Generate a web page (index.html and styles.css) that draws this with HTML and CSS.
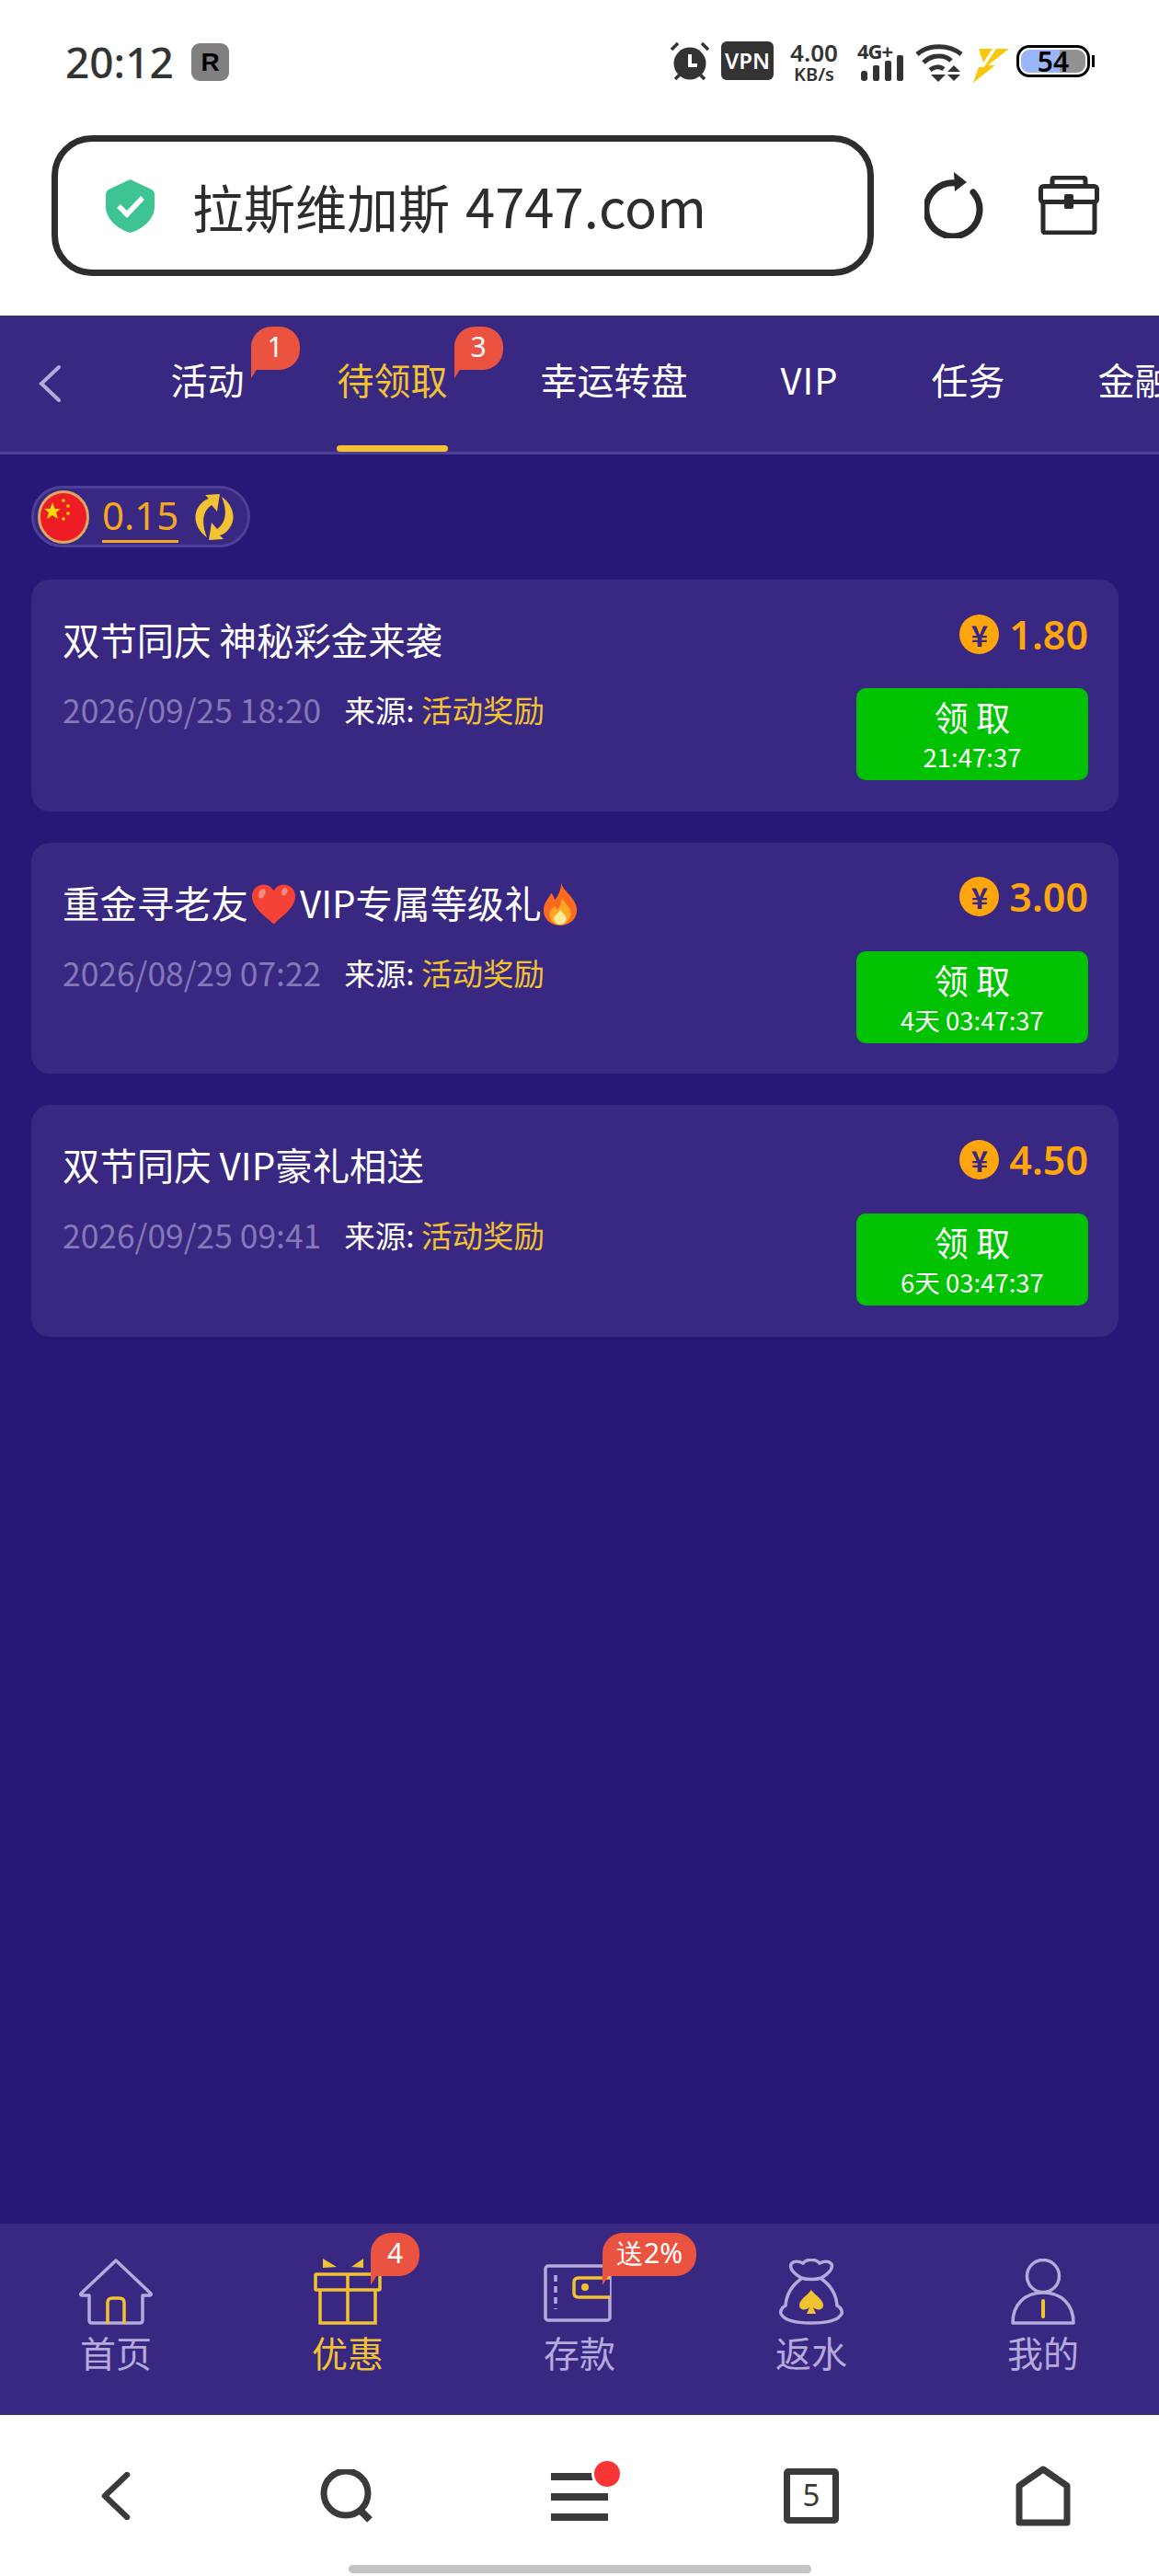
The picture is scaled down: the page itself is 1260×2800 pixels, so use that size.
FILE: index.html
```html
<!DOCTYPE html>
<html lang="zh">
    <head>
        <meta charset="utf-8">
        <title>拉斯维加斯 4747.com</title>
        <link rel="stylesheet" href="styles.css">
    </head>
    <body>
        <div class="page">
            <div class="statusbar">
                <div class="status-left">
                    <span class="clock">20:12</span>
                    <span class="app-icon">R</span>
                </div>
                <div class="status-right">
                    <svg class="ic-alarm" viewBox="0 0 42 43">
                        <circle cx="21" cy="24" r="17.5" fill="#333"/>
                        <path d="M21 14V26H29" fill="none" stroke="#fff" stroke-width="4"/>
                        <path d="M1 9L8 2M41 9L34 2M5 41L10 36M37 41L32 36" stroke="#333" stroke-width="3.5"/>
                    </svg>
                    <span class="vpn">VPN</span>
                    <div class="speed"><span class="speed-num">4.00</span><span class="speed-unit">KB/s</span></div>
                    <div class="signal">
                        <span class="signal-type">4G+</span>
                        <svg class="ic-bars" viewBox="0 0 48 28">
                            <rect x="2" y="17" width="7" height="11" rx="3" fill="#333"/>
                            <rect x="15" y="11" width="7" height="17" rx="2" fill="#333"/>
                            <rect x="28" y="6" width="7" height="22" rx="2" fill="#333"/>
                            <rect x="41" y="0" width="7" height="28" rx="2" fill="#333"/>
                        </svg>
                    </div>
                    <svg class="ic-wifi" viewBox="0 0 52 42">
                        <path d="M2 12C15 1 37 1 50 12" fill="none" stroke="#333" stroke-width="5"/>
                        <path d="M9 21C18 12 32 12 39 19" fill="none" stroke="#333" stroke-width="5"/>
                        <path d="M16 29C21 25 27 25 31 28" fill="none" stroke="#333" stroke-width="5"/>
                        <path d="M17 34H33L25 42ZM42 24L49 31H35ZM35 34H49L42 41Z" fill="#333"/>
                    </svg>
                    <svg class="ic-bolt" viewBox="0 0 39 38">
                        <path d="M6 1H21L11 16ZM25 1H39L16 19L24 19L0 38L6 21L12 21L5 31Z" fill="#f9c80e"/>
                    </svg>
                    <div class="battery"><span class="battery-num">54</span></div>
                </div>
            </div>

            <div class="toolbar">
                <div class="urlbar">
                    <svg class="ic-shield" viewBox="0 0 53 58">
                        <path d="M26.5 0L50 11Q53 13 53 17V30C53 44 38 55 26.5 58C15 55 0 44 0 30V17Q0 13 3 11Z" fill="#3dc492"/>
                        <path d="M14 29L23 38L40 20" fill="none" stroke="#fff" stroke-width="5.5"/>
                    </svg>
                    <span class="urltext"><span class="urltext-cn">拉斯维加斯</span> 4747.com</span>
                </div>
                <svg class="ic-reload" viewBox="0 0 64 72">
                    <path d="M53 22A29 29 0 1 1 34 12" fill="none" stroke="#2a2a2a" stroke-width="7" stroke-linecap="round"/>
                    <path d="M32 0L46 11L33 21Z" fill="#2a2a2a"/>
                </svg>
                <svg class="ic-toolbox" viewBox="0 0 66 64">
                    <path d="M15 11V5Q15 2 18 2H48Q51 2 51 5V11" fill="none" stroke="#2a2a2a" stroke-width="5"/>
                    <rect x="2.500" y="11.500" width="61" height="17" rx="3" fill="none" stroke="#2a2a2a" stroke-width="5"/>
                    <path d="M5 28V59Q5 62 8 62H58Q61 62 61 59V28" fill="none" stroke="#2a2a2a" stroke-width="5"/>
                    <rect x="28" y="20" width="10" height="16" rx="2" fill="#2a2a2a"/>
                </svg>
            </div>

            <div class="tabbar">
                <div class="back-btn">
                    <svg class="ic-tabback" viewBox="0 0 26 42">
                        <path d="M23 3L4 21L23 39" fill="none" stroke="#b5aadc" stroke-width="4" stroke-linecap="round"/>
                    </svg>
                </div>
                <div class="tab"><span class="tab-label">活动<span class="badge tab-badge">1</span></span></div>
                <div class="tab tab-active"><span class="tab-label">待领取<span class="badge tab-badge">3</span></span></div>
                <div class="tab"><span class="tab-label">幸运转盘</span></div>
                <div class="tab"><span class="tab-label tab-latin">VIP</span></div>
                <div class="tab"><span class="tab-label">任务</span></div>
                <div class="tab"><span class="tab-label">金融</span></div>
            </div>

            <div class="content">
                <div class="balance">
                    <svg class="ic-flag" viewBox="0 0 56 58">
                        <ellipse cx="28" cy="29" rx="26.500" ry="27.500" fill="#ee1c25" stroke="#dca862" stroke-width="3"/>
                        <path d="M16 13L18.500 20H25L20 24L22 31L16 27L10 31L12 24L7 20H13.500Z" fill="#ffde00"/>
                        <circle cx="28" cy="11" r="1.800" fill="#ffde00"/>
                        <circle cx="33" cy="17" r="1.800" fill="#ffde00"/>
                        <circle cx="33" cy="25" r="1.800" fill="#ffde00"/>
                        <circle cx="28" cy="31" r="1.800" fill="#ffde00"/>
                    </svg>
                    <span class="balance-num">0.15</span>
                    <svg class="ic-swap" viewBox="0 0 48 50">
                        <g fill="#f2c230">
                            <path id="swap-half" d="M30 0L27 19L21 12C12 18 9 30 16 47C4 39 -2 22 10 10C13 7 15 6 18 5L14 1Z"/>
                            <use href="#swap-half" transform="rotate(180 24 25)"/>
                        </g>
                    </svg>
                </div>

                <div class="card">
                    <div class="card-left">
                        <div class="card-title">双节同庆 神秘彩金来袭</div>
                        <div class="card-meta">
                            <span class="card-date">2026/09/25 18:20</span>
                            <span class="card-source">来源: <span class="card-kind">活动奖励</span></span>
                        </div>
                    </div>
                    <div class="card-right">
                        <div class="amount"><span class="coin">¥</span><span class="amount-num">1.80</span></div>
                        <div class="claim"><span class="claim-text">领 取</span><span class="claim-time">21:47:37</span></div>
                    </div>
                </div>

                <div class="card">
                    <div class="card-left">
                        <div class="card-title">重金寻老友<svg class="ic-heart" viewBox="0 0 48 44">
                                <path d="M24 44C15 35 0 26 0 13C0 5 6 0 13 0C18 0 22 3 24 7C26 3 30 0 35 0C42 0 48 5 48 13C48 26 33 35 24 44Z" fill="#f44336"/>
                                <ellipse cx="11" cy="10" rx="3.500" ry="5.500" transform="rotate(25 11 10)" fill="#f98a80"/>
                                <ellipse cx="36" cy="8" rx="3" ry="4.500" transform="rotate(25 36 8)" fill="#f98a80"/>
                            </svg>VIP专属等级礼<svg class="ic-fire" viewBox="0 0 40 48">
                                <path d="M21 0C24 9 34 14 38 25C42 38 32 48 20 48C8 48 -2 38 2 25C4 19 8 16 10 11C12 14 13 16 14 19C18 14 21 8 21 0Z" fill="#fb6a1e"/>
                                <path d="M22 16C24 23 33 27 32 36C31 43 26 47 20 47C13 47 8 43 8 36C8 31 11 28 14 26C15 28 16 29 17 30C20 26 22 22 22 16Z" fill="#ffa726"/>
                                <path d="M20 30C22 34 27 36 27 40C27 44 24 47 20 47C16 47 13 44 13 40C13 36 18 35 20 30Z" fill="#ffeb9c"/>
                            </svg></div>
                        <div class="card-meta">
                            <span class="card-date">2026/08/29 07:22</span>
                            <span class="card-source">来源: <span class="card-kind">活动奖励</span></span>
                        </div>
                    </div>
                    <div class="card-right">
                        <div class="amount"><span class="coin">¥</span><span class="amount-num">3.00</span></div>
                        <div class="claim"><span class="claim-text">领 取</span><span class="claim-time">4天 03:47:37</span></div>
                    </div>
                </div>

                <div class="card">
                    <div class="card-left">
                        <div class="card-title">双节同庆 VIP豪礼相送</div>
                        <div class="card-meta">
                            <span class="card-date">2026/09/25 09:41</span>
                            <span class="card-source">来源: <span class="card-kind">活动奖励</span></span>
                        </div>
                    </div>
                    <div class="card-right">
                        <div class="amount"><span class="coin">¥</span><span class="amount-num">4.50</span></div>
                        <div class="claim"><span class="claim-text">领 取</span><span class="claim-time">6天 03:47:37</span></div>
                    </div>
                </div>
            </div>

            <div class="nav">
                <div class="nav-item">
                    <svg class="nav-icon" viewBox="0 0 80 72">
                        <path d="M40 2L78 38Q79 40 76 40H69V67Q69 70 66 70H14Q11 70 11 67V40H4Q1 40 2 38Z" fill="none" stroke="#b5aadc" stroke-width="3.500" stroke-linejoin="round"/>
                        <path d="M31 71V48Q31 43 36 43H44Q49 43 49 48V71" fill="none" stroke="#f2c230" stroke-width="3.500"/>
                    </svg>
                    <span class="nav-label">首页</span>
                </div>
                <div class="nav-item nav-active">
                    <svg class="nav-icon" viewBox="0 0 80 72">
                        <path d="M13 10V0L28 9ZM57 0V10L44 9Z" fill="#f2c230"/>
                        <rect x="5" y="17" width="70" height="17" rx="1" fill="none" stroke="#f2c230" stroke-width="3.500"/>
                        <path d="M10 34V70H70V34M40 17V70" fill="none" stroke="#f2c230" stroke-width="3.500"/>
                    </svg>
                    <span class="nav-label">优惠</span>
                    <span class="badge nav-badge">4</span>
                </div>
                <div class="nav-item">
                    <svg class="nav-icon nav-wallet" viewBox="0 0 74 72">
                        <rect x="2" y="8" width="70" height="59" rx="3" fill="none" stroke="#b5aadc" stroke-width="3.500"/>
                        <path d="M13 18V55" stroke="#b5aadc" stroke-width="3.500" stroke-dasharray="7 5"/>
                        <path d="M72 21H38Q33 21 33 26V37Q33 42 38 42H72" fill="#382881" stroke="#f2c230" stroke-width="3.500"/>
                        <circle cx="45" cy="31" r="4" fill="#f2c230"/>
                    </svg>
                    <span class="nav-label">存款</span>
                    <span class="badge nav-badge">送2%</span>
                </div>
                <div class="nav-item">
                    <svg class="nav-icon" viewBox="0 0 70 72">
                        <path d="M24 21C16 16 11 11 13 6C16 2 22 3 26 5C30 0 40 0 44 5C48 3 54 2 57 6C59 11 54 16 46 21C40 23 30 23 24 21Z" fill="none" stroke="#b5aadc" stroke-width="3.500"/>
                        <path d="M24 22C14 29 8 39 7 51C3 53 1 57 2 60C6 68 22 70 35 70C48 70 64 68 68 60C69 57 67 53 63 51C62 39 56 29 46 22" fill="none" stroke="#b5aadc" stroke-width="3.500"/>
                        <path d="M35 34C30 41 22 44 22 51C22 56 29 57 33 53L30 60H40L37 53C41 57 48 56 48 51C48 44 40 41 35 34Z" fill="#f2c230"/>
                    </svg>
                    <span class="nav-label">返水</span>
                </div>
                <div class="nav-item">
                    <svg class="nav-icon" viewBox="0 0 70 72">
                        <circle cx="35" cy="19" r="17.500" fill="none" stroke="#b5aadc" stroke-width="3.500"/>
                        <path d="M2 70C2 50 15 37 35 37C55 37 68 50 68 70Z" fill="none" stroke="#b5aadc" stroke-width="3.500" stroke-linejoin="round"/>
                        <path d="M35 46V63" stroke="#f2c230" stroke-width="4" stroke-linecap="round"/>
                    </svg>
                    <span class="nav-label">我的</span>
                </div>
            </div>

            <div class="browserbar">
                <div class="browser-icons">
                    <div class="browser-item">
                        <svg class="ic-b-back" viewBox="0 0 32 52">
                            <path d="M28 3L4 26L28 49" fill="none" stroke="#3a3a3a" stroke-width="6.500" stroke-linecap="round" stroke-linejoin="round"/>
                        </svg>
                    </div>
                    <div class="browser-item">
                        <svg class="ic-b-search" viewBox="0 0 60 58">
                            <circle cx="28" cy="26" r="24" fill="none" stroke="#3a3a3a" stroke-width="7"/>
                            <path d="M43 44L54 55" stroke="#3a3a3a" stroke-width="8"/>
                        </svg>
                    </div>
                    <div class="browser-item">
                        <svg class="ic-b-menu" viewBox="0 0 90 76">
                            <path d="M14 17H76M14 39H76M14 61H76" stroke="#3a3a3a" stroke-width="8"/>
                            <circle cx="75" cy="14" r="17" fill="#fff"/>
                            <circle cx="75" cy="14" r="14" fill="#f93535"/>
                        </svg>
                    </div>
                    <div class="browser-item">
                        <div class="tabcount">5</div>
                    </div>
                    <div class="browser-item">
                        <svg class="ic-b-home" viewBox="0 0 60 66">
                            <path d="M30 4L56 22V62H4V22Z" fill="none" stroke="#3a3a3a" stroke-width="7" stroke-linejoin="round"/>
                        </svg>
                    </div>
                </div>
                <div class="home-pill"></div>
            </div>
        </div>
    </body>
</html>
```

FILE: styles.css
```css
body{
    margin: 0;
    overflow: hidden;
    background-color: #ffffff;
    font-family: "Noto Sans CJK SC", "Noto Sans", sans-serif;
}
.page{
    width: 1260px;
    height: 2800px;
    display: flex;
    flex-direction: column;
}

/* status bar */
.statusbar{
    height: 130px;
    flex: none;
    display: flex;
    justify-content: space-between;
    padding: 45px 75px 0 71px;
    box-sizing: border-box;
    color: #333333;
}
.status-left{
    display: flex;
    align-items: flex-start;
}
.clock{
    font-family: "Noto Sans", sans-serif;
    font-size: 46px;
    font-weight: 500;
    line-height: 44px;
    width: 137px;
}
.app-icon{
    width: 41px;
    height: 41px;
    margin-top: 2px;
    border-radius: 9px;
    background-color: #808080;
    color: #000000;
    font-family: "Liberation Sans", sans-serif;
    font-size: 28px;
    font-weight: bold;
    line-height: 41px;
    text-align: center;
}
.status-right{
    display: flex;
    align-items: flex-start;
}
.ic-alarm{
    width: 42px;
    height: 43px;
}
.vpn{
    width: 57px;
    height: 42px;
    margin-left: 13px;
    border-radius: 6px;
    background-color: #333333;
    color: #ffffff;
    font-family: "Noto Sans", sans-serif;
    font-size: 24px;
    font-weight: 600;
    line-height: 42px;
    text-align: center;
}
.speed{
    width: 54px;
    margin-left: 17px;
    display: flex;
    flex-direction: column;
    align-items: center;
    font-family: "Noto Sans", sans-serif;
    font-weight: 600;
}
.speed-num{
    font-size: 26px;
    line-height: 25px;
}
.speed-unit{
    font-size: 20px;
    line-height: 21px;
}
.signal{
    width: 50px;
    margin-left: 20px;
    position: relative;
    height: 44px;
}
.signal-type{
    display: block;
    font-family: "Noto Sans", sans-serif;
    font-size: 22px;
    font-weight: bold;
    line-height: 20px;
    letter-spacing: -1px;
}
.ic-bars{
    position: absolute;
    left: 2px;
    top: 15px;
    width: 48px;
    height: 28px;
}
.ic-wifi{
    width: 52px;
    height: 42px;
    margin-left: 13px;
    margin-top: 2px;
}
.ic-bolt{
    width: 39px;
    height: 38px;
    margin-left: 11px;
    margin-top: 7px;
}
.battery{
    width: 80px;
    height: 35px;
    margin-left: 8px;
    margin-top: 4px;
    box-sizing: border-box;
    border: 3px solid #000000;
    border-radius: 14px;
    position: relative;
    background: linear-gradient(90deg, #9ab6fb 0, #9ab6fb 60%, #929292 60%, #929292 100%) content-box;
    padding: 2px;
    text-align: center;
}
.battery::after{
    content: "";
    position: absolute;
    right: -8px;
    top: 8px;
    width: 3px;
    height: 13px;
    background-color: #000000;
}
.battery-num{
    display: block;
    margin-top: -3px;
    color: #000000;
    font-family: "Noto Sans", sans-serif;
    font-size: 30px;
    font-weight: 600;
    line-height: 31px;
}

/* browser url bar */
.toolbar{
    height: 213px;
    flex: none;
    display: flex;
    align-items: flex-start;
    padding: 17px 0 0 56px;
    box-sizing: border-box;
}
.urlbar{
    width: 894px;
    height: 153px;
    box-sizing: border-box;
    border: 7px solid #2d2d2d;
    border-radius: 44px;
    display: flex;
    align-items: center;
    padding-left: 52px;
}
.ic-shield{
    width: 53px;
    height: 58px;
}
.urltext{
    margin-left: 41px;
    color: #2d2d2d;
    font-size: 58px;
    line-height: 70px;
    white-space: nowrap;
}
.urltext-cn{
    font-size: 56px;
    margin-right: 4px;
}
.ic-reload{
    width: 64px;
    height: 72px;
    margin-left: 55px;
    margin-top: 40px;
}
.ic-toolbox{
    width: 66px;
    height: 64px;
    margin-left: 60px;
    margin-top: 44px;
}

/* tabs */
.tabbar{
    height: 151px;
    flex: none;
    box-sizing: border-box;
    border-bottom: 3px solid #4f3f98;
    background-color: #382881;
    display: flex;
    overflow: hidden;
}
.back-btn{
    width: 135px;
    flex: none;
    padding: 53px 0 0 41px;
    box-sizing: border-box;
}
.ic-tabback{
    display: block;
    width: 26px;
    height: 42px;
}
.tab{
    flex: none;
    height: 148px;
    padding: 41px 50.5px 0;
    box-sizing: border-box;
    position: relative;
    color: #ffffff;
    font-size: 40px;
    line-height: 56px;
    white-space: nowrap;
}
.tab-label{
    position: relative;
    display: block;
}
.tab-latin{
    letter-spacing: 1px;
}
.tab-active{
    color: #f2c230;
}
.tab-active::after{
    content: "";
    position: absolute;
    left: 50px;
    right: 50px;
    bottom: 0;
    height: 7px;
    border-radius: 4px;
    background-color: #f2c230;
}
.badge{
    position: absolute;
    height: 47px;
    min-width: 53px;
    box-sizing: border-box;
    padding: 0 15px;
    border-radius: 22px 22px 22px 0;
    background-color: #e95340;
    color: #ffffff;
    font-family: "Noto Sans", sans-serif;
    font-size: 30px;
    line-height: 44px;
    text-align: center;
    white-space: nowrap;
}
.badge::after{
    content: "";
    position: absolute;
    left: 0;
    top: 38px;
    width: 12px;
    height: 19px;
    background-color: #e95340;
    clip-path: polygon(0 0, 100% 0, 0 100%);
}
.tab-badge{
    left: calc(100% + 7px);
    top: -29px;
}

/* content */
.content{
    flex: 1;
    background-color: #271776;
    padding: 34px 44px 0 34px;
}
.balance{
    width: 238px;
    height: 67px;
    box-sizing: border-box;
    border: 3px solid #4f3f98;
    border-radius: 34px;
    background-color: #382881;
    display: flex;
    align-items: center;
    padding-left: 4px;
    margin-bottom: 35px;
}
.ic-flag{
    width: 56px;
    height: 58px;
    flex: none;
}
.balance-num{
    margin-left: 14px;
    color: #f5a623;
    font-family: "Noto Sans", sans-serif;
    font-size: 42px;
    line-height: 54px;
    border-bottom: 3px solid #f5a623;
}
.ic-swap{
    width: 48px;
    height: 50px;
    margin-left: 15px;
    flex: none;
}
.card{
    width: 1182px;
    height: 251.5px;
    margin-bottom: 34px;
    padding: 34px 33px 0 34px;
    box-sizing: border-box;
    border-radius: 20px;
    background-color: #382881;
    display: flex;
    justify-content: space-between;
}
.card-title{
    margin-top: 3px;
    color: #ffffff;
    font-size: 40.4px;
    line-height: 56px;
    white-space: nowrap;
}
.ic-heart{
    width: 47px;
    height: 44px;
    margin: 0 5px 0 4px;
    vertical-align: -7px;
}
.ic-fire{
    width: 40px;
    height: 46px;
    vertical-align: -8px;
}
.card-meta{
    margin-top: 26px;
    display: flex;
    align-items: center;
    line-height: 44px;
    font-size: 33.5px;
}
.card-date{
    color: #8478b9;
    font-size: 35.4px;
    white-space: nowrap;
}
.card-source{
    margin-left: 25px;
    color: #ffffff;
}
.card-kind{
    color: #f2c230;
}
.card-right{
    display: flex;
    flex-direction: column;
    align-items: flex-end;
}
.amount{
    height: 50px;
    display: flex;
    align-items: center;
}
.coin{
    width: 43px;
    height: 43px;
    border-radius: 50%;
    background-color: #ffa50d;
    color: #382881;
    font-size: 31px;
    font-weight: bold;
    line-height: 43px;
    text-align: center;
}
.amount-num{
    margin-left: 11px;
    color: #ffa50d;
    font-family: "Noto Sans", sans-serif;
    font-size: 43px;
    font-weight: 600;
}
.claim{
    width: 252px;
    height: 100px;
    margin-top: 34px;
    padding-top: 9px;
    box-sizing: border-box;
    border-radius: 10px;
    background-color: #00c200;
    color: #ffffff;
    display: flex;
    flex-direction: column;
    align-items: center;
}
.claim-text{
    font-size: 37px;
    line-height: 44px;
}
.claim-time{
    margin-top: 3px;
    font-size: 27.5px;
    line-height: 36px;
}

/* bottom nav */
.nav{
    height: 208px;
    flex: none;
    background-color: #382881;
    display: flex;
}
.nav-item{
    flex: 1;
    padding-top: 38px;
    box-sizing: border-box;
    display: flex;
    flex-direction: column;
    align-items: center;
    position: relative;
    color: #b5aadc;
}
.nav-icon{
    height: 72px;
    display: block;
}
.nav-wallet{
    margin-left: -4px;
}
.nav-label{
    margin-top: 5px;
    font-size: 39px;
    line-height: 48px;
}
.nav-active{
    color: #f2c230;
}
.nav-badge{
    left: 151px;
    top: 10px;
}

/* browser bottom bar */
.browserbar{
    height: 175px;
    flex: none;
    background-color: #ffffff;
    padding-top: 12px;
    box-sizing: border-box;
}
.browser-icons{
    height: 151px;
    display: flex;
}
.browser-item{
    flex: 1;
    display: flex;
    align-items: center;
    justify-content: center;
}
.ic-b-back{
    width: 32px;
    height: 52px;
}
.ic-b-search{
    width: 60px;
    height: 58px;
}
.ic-b-menu{
    width: 90px;
    height: 76px;
}
.ic-b-home{
    width: 60px;
    height: 66px;
}
.tabcount{
    width: 60px;
    height: 60px;
    box-sizing: border-box;
    border: 7px solid #3a3a3a;
    border-radius: 5px;
    color: #3a3a3a;
    font-family: "Noto Sans", sans-serif;
    font-size: 33px;
    line-height: 44px;
    text-align: center;
}
.home-pill{
    width: 503px;
    height: 9px;
    margin: 0 auto;
    border-radius: 5px;
    background-color: #c4c4c4;
}
```
